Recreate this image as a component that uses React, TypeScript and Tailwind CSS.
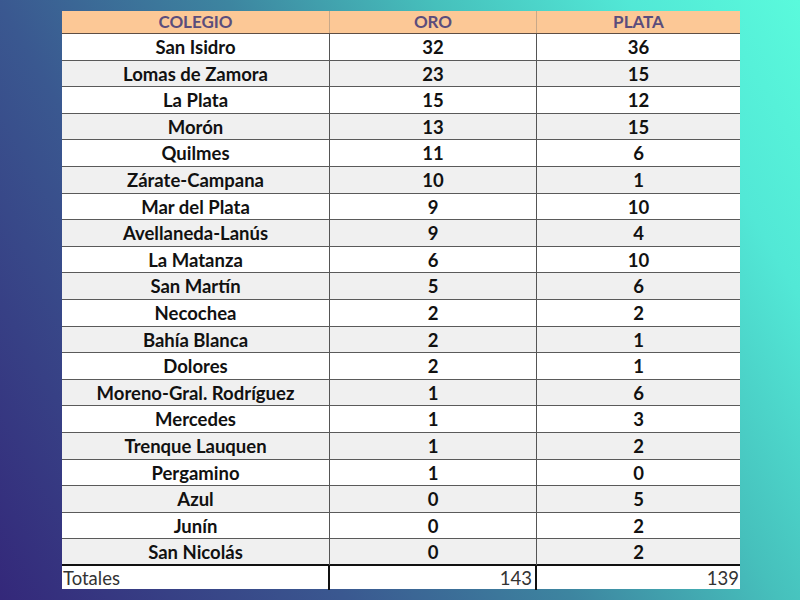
const rows: [string, number, number][] = [
  ["San Isidro", 32, 36],
  ["Lomas de Zamora", 23, 15],
  ["La Plata", 15, 12],
  ["Morón", 13, 15],
  ["Quilmes", 11, 6],
  ["Zárate-Campana", 10, 1],
  ["Mar del Plata", 9, 10],
  ["Avellaneda-Lanús", 9, 4],
  ["La Matanza", 6, 10],
  ["San Martín", 5, 6],
  ["Necochea", 2, 2],
  ["Bahía Blanca", 2, 1],
  ["Dolores", 2, 1],
  ["Moreno-Gral. Rodríguez", 1, 6],
  ["Mercedes", 1, 3],
  ["Trenque Lauquen", 1, 2],
  ["Pergamino", 1, 0],
  ["Azul", 0, 5],
  ["Junín", 0, 2],
  ["San Nicolás", 0, 2],
];

export default function App() {
  return (
    <div className="h-[600px] w-[800px] overflow-hidden bg-[linear-gradient(60deg,#34287a_0%,#3a5890_30%,#3d85a0_50%,#46c0bc_68%,#52e8d6_85%,#5afadc_100%)] pt-[11px] pl-[62px] font-['Lato','Liberation_Sans',sans-serif]">
      <div className="w-[678px]">
        <div className="grid h-[23px] grid-cols-[268px_207px_203px] border-b border-[#5e4e44] bg-[#fcc896] text-[17px] font-bold leading-[22px] text-[#5b4d7c]">
          <div className="border-r border-[#c8a888] text-center">COLEGIO</div>
          <div className="border-r border-[#c8a888] text-center">ORO</div>
          <div className="text-center">PLATA</div>
        </div>
        {rows.map(([name, oro, plata], i) => (
          <div
            key={name}
            className={`grid h-[26.6px] grid-cols-[268px_207px_203px] border-b border-[#5a5a5a] text-[18.5px] font-bold leading-[26px] text-[#111] ${
              i % 2 === 0 ? "bg-white" : "bg-[#f0f0f0]"
            } ${i === rows.length - 1 ? "border-b-2 border-b-[#111]" : ""}`}
          >
            <div className="border-r border-[#555] text-center">{name}</div>
            <div className="border-r border-[#555] text-center">{oro}</div>
            <div className="text-center">{plata}</div>
          </div>
        ))}
        <div className="grid h-[23px] grid-cols-[268px_207px_203px] bg-white text-[18.5px] leading-[24px] text-[#333]">
          <div className="border-r-2 border-[#111] pl-[1px]">Totales</div>
          <div className="border-r-2 border-[#111] pr-[3px] text-right">143</div>
          <div className="pr-[1px] text-right">139</div>
        </div>
      </div>
    </div>
  );
}
